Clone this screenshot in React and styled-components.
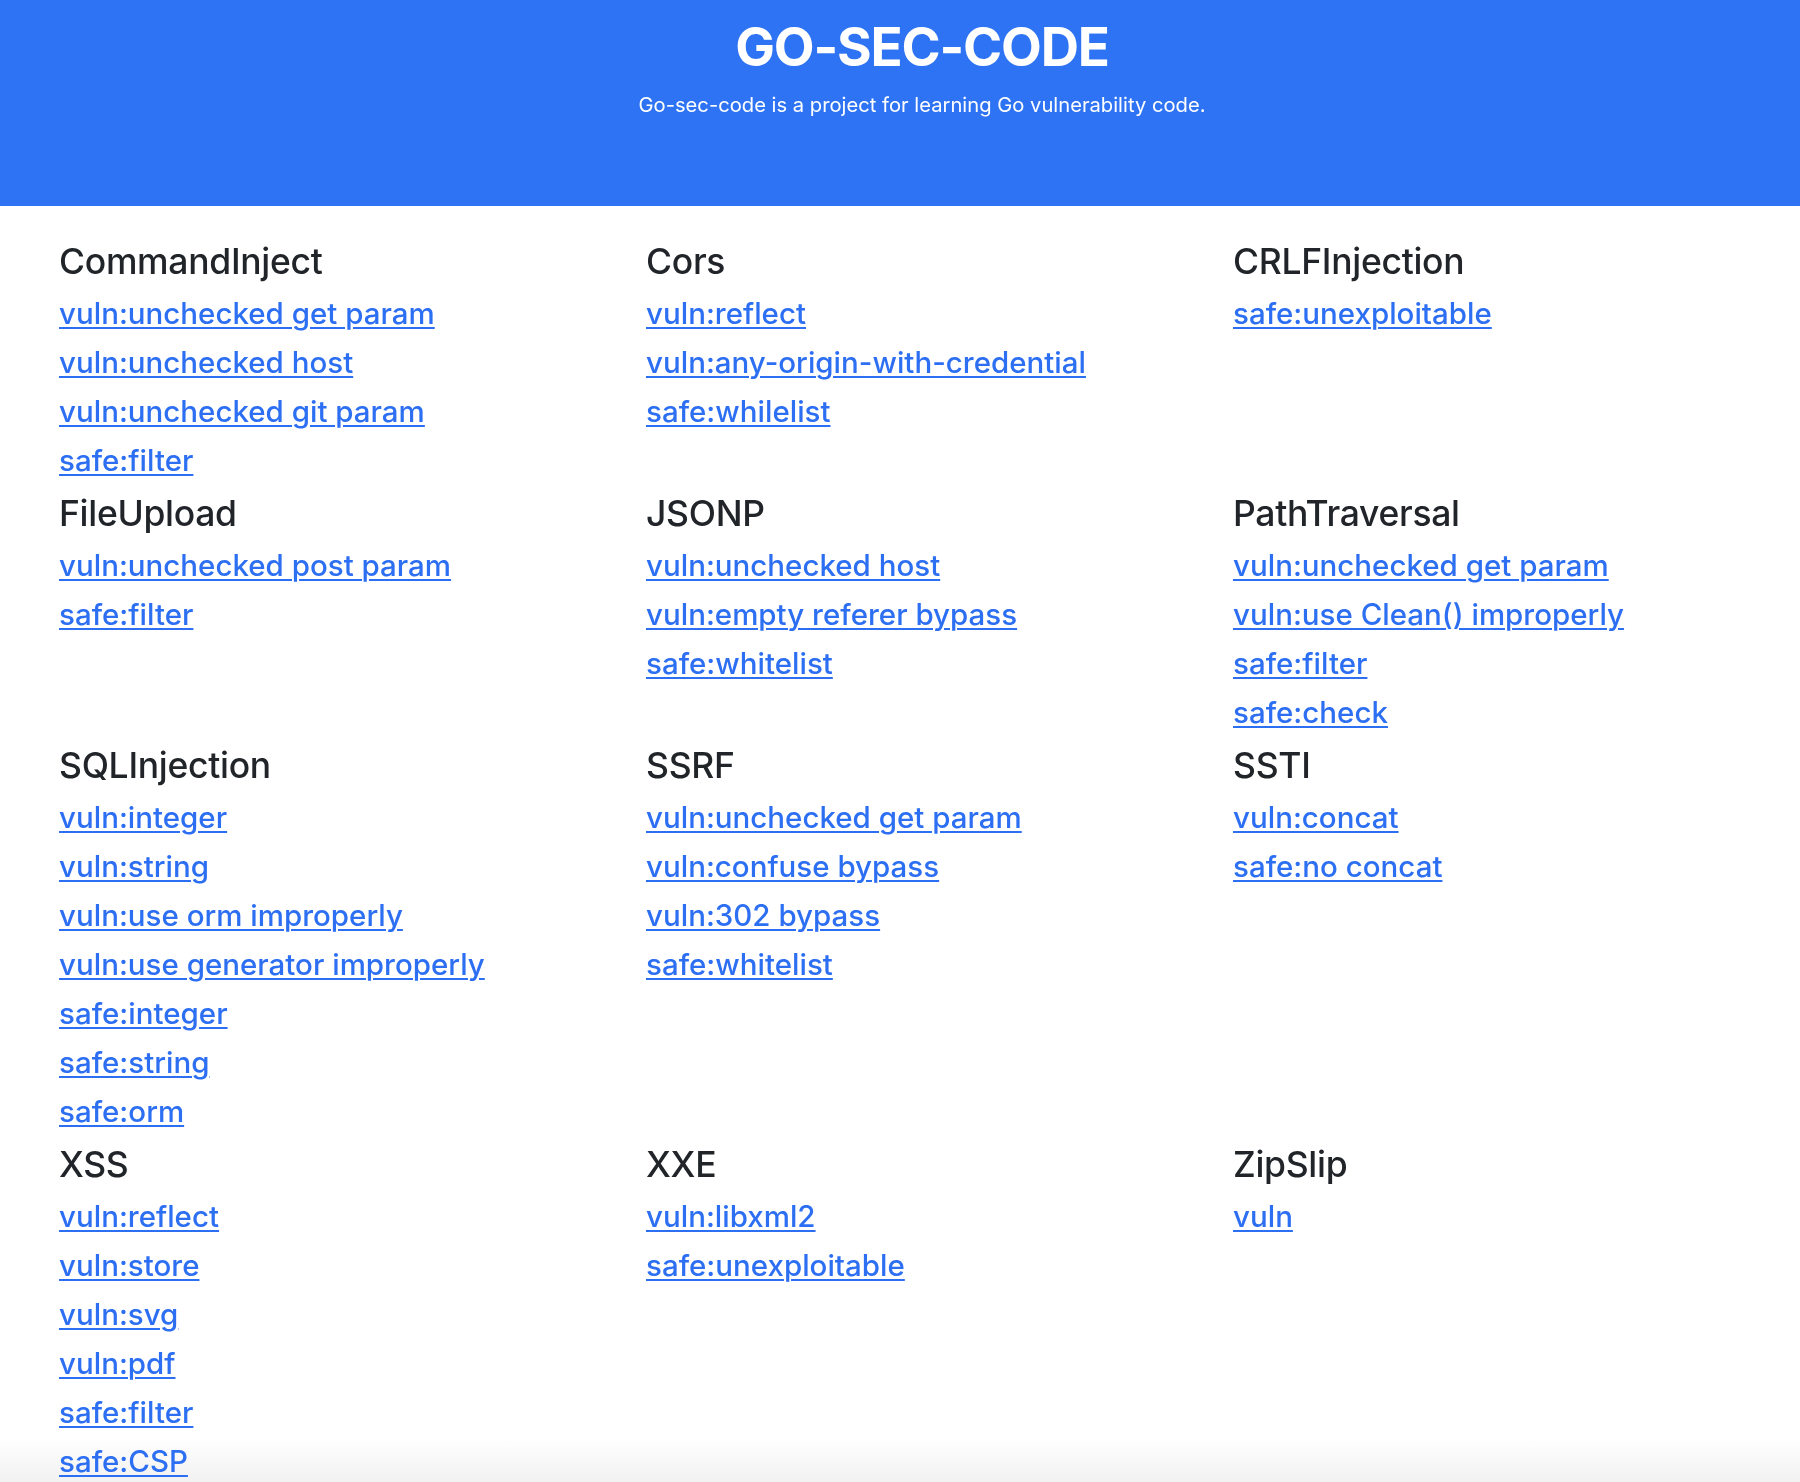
import React from "react";
import styled, { createGlobalStyle } from "styled-components";

const sections = [
  {
    title: "CommandInject",
    links: [
      "vuln:unchecked get param",
      "vuln:unchecked host",
      "vuln:unchecked git param",
      "safe:filter",
    ],
  },
  {
    title: "Cors",
    links: ["vuln:reflect", "vuln:any-origin-with-credential", "safe:whilelist"],
  },
  { title: "CRLFInjection", links: ["safe:unexploitable"] },
  { title: "FileUpload", links: ["vuln:unchecked post param", "safe:filter"] },
  {
    title: "JSONP",
    links: ["vuln:unchecked host", "vuln:empty referer bypass", "safe:whitelist"],
  },
  {
    title: "PathTraversal",
    links: [
      "vuln:unchecked get param",
      "vuln:use Clean() improperly",
      "safe:filter",
      "safe:check",
    ],
  },
  {
    title: "SQLInjection",
    links: [
      "vuln:integer",
      "vuln:string",
      "vuln:use orm improperly",
      "vuln:use generator improperly",
      "safe:integer",
      "safe:string",
      "safe:orm",
    ],
  },
  {
    title: "SSRF",
    links: [
      "vuln:unchecked get param",
      "vuln:confuse bypass",
      "vuln:302 bypass",
      "safe:whitelist",
    ],
  },
  { title: "SSTI", links: ["vuln:concat", "safe:no concat"] },
  {
    title: "XSS",
    links: [
      "vuln:reflect",
      "vuln:store",
      "vuln:svg",
      "vuln:pdf",
      "safe:filter",
      "safe:CSP",
    ],
  },
  { title: "XXE", links: ["vuln:libxml2", "safe:unexploitable"] },
  { title: "ZipSlip", links: ["vuln"] },
];

export default function App() {
  return (
    <>
      <GlobalStyle />
      <BottomFade />
      <Banner>
        <Title>GO-SEC-CODE</Title>
        <Lead>Go-sec-code is a project for learning Go vulnerability code.</Lead>
      </Banner>
      <Grid>
        {sections.map((section) => (
          <Section key={section.title}>
            <Heading>{section.title}</Heading>
            {section.links.map((link) => (
              <LinkLine key={link}>
                <a href="#">{link}</a>
              </LinkLine>
            ))}
          </Section>
        ))}
      </Grid>
    </>
  );
}

const GlobalStyle = createGlobalStyle`
  body {
    margin: 0;
    background: #fff;
    font-family: Inter, "Noto Sans", "Liberation Sans", sans-serif;
    color: #212529;
  }
`;

const Banner = styled.header`
  background: #2d73f3;
  color: #fff;
  text-align: center;
  padding: 15px 0 87px 44px;
`;

const Title = styled.h1`
  margin: 0;
  font-size: 53px;
  line-height: 64px;
  font-weight: 700;
  letter-spacing: -1.2px;
`;

const Lead = styled.p`
  margin: 12px 0 0;
  font-size: 20.2px;
  line-height: 28px;
  font-weight: 400;
`;

const Grid = styled.main`
  display: grid;
  grid-template-columns: repeat(3, 587px);
  padding: 27px 0 0 59px;
`;

const Section = styled.section`
  display: flex;
  flex-direction: column;
`;

const Heading = styled.h2`
  margin: 2px 0 0;
  font-size: 35.5px;
  line-height: 54px;
  font-weight: 500;
  color: #212529;
  letter-spacing: -0.3px;
`;

const LinkLine = styled.div`
  font-size: 29.5px;
  line-height: 49px;
  font-weight: 500;

  a {
    color: #2d6ff2;
    text-decoration: underline;
    text-decoration-thickness: 2px;
    text-underline-offset: 3px;
  }
`;

const BottomFade = styled.div`
  position: fixed;
  z-index: -1;
  left: 0;
  right: 0;
  bottom: 0;
  height: 44px;
  pointer-events: none;
  background: linear-gradient(to bottom, rgba(240, 240, 240, 0), rgba(240, 240, 240, 0.9));
`;
